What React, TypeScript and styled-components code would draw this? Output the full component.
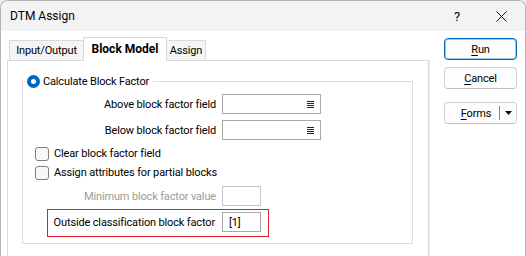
import React from "react";
import styled, { createGlobalStyle, css } from "styled-components";

const Global = createGlobalStyle`
  html, body { margin: 0; padding: 0; background: #ececec; }
  body {
    font-family: Roboto, "Liberation Sans", sans-serif;
    font-size: 11px;
    letter-spacing: -0.15px;
    color: #000;
  }
  * { box-sizing: border-box; }
`;

const Window = styled.div`
  width: 526px;
  height: 256px;
  display: flex;
  flex-direction: column;
  background: #fff;
  border: 1px solid #b4b4b4;
  border-bottom: none;
  border-radius: 8px 8px 0 0;
  overflow: hidden;
`;

const TitleBar = styled.div`
  height: 30px;
  flex: none;
  display: flex;
  align-items: center;
  background: #f3f3f3;
  padding-left: 9px;
  padding-right: 2px;
`;

const Title = styled.div`
  flex: 1;
  font-size: 12px;
  letter-spacing: 0;
`;

const CaptionButton = styled.div`
  width: 44px;
  height: 30px;
  display: flex;
  align-items: center;
  justify-content: center;
  font-size: 13px;
`;

const Body = styled.div`
  flex: 1;
  display: flex;
  min-height: 0;
`;

const TabArea = styled.div`
  width: 422px;
  margin-left: 6px;
  display: flex;
  flex-direction: column;
`;

const TabStrip = styled.div`
  display: flex;
  align-items: flex-end;
  margin-top: 6px;
  padding-left: 2px;
  position: relative;
  z-index: 1;
`;

const Tab = styled.div<{ $active?: boolean; $w: number }>`
  width: ${(p) => p.$w}px;
  display: flex;
  align-items: center;
  justify-content: center;
  border: 1px solid #d9d9d9;
  border-bottom: none;
  ${(p) =>
    p.$active
      ? css`
          height: 24px;
          margin-bottom: -1px;
          background: #fff;
          font-weight: 700;
          font-size: 12px;
          letter-spacing: 0;
          padding-bottom: 2px;
        `
      : css`
          height: 20px;
          background: #f5f5f5;
        `}
  & + & {
    margin-left: -1px;
  }
`;

const Panel = styled.div`
  flex: 1;
  border: 1px solid #d9d9d9;
  border-bottom: none;
  box-shadow: 1px 0 0 #ececec;
  background: #fff;
  padding: 20px 15px 0 14px;
`;

const Group = styled.div`
  position: relative;
  height: 163px;
  border: 1px solid #dcdcdc;
  display: flex;
  flex-direction: column;
`;

const Legend = styled.div`
  position: absolute;
  left: 3px;
  top: -9px;
  height: 16px;
  display: flex;
  align-items: center;
  gap: 3px;
  padding: 0 4px 0 1px;
  background: #fff;
`;

const Radio = styled.span`
  width: 13px;
  height: 13px;
  border-radius: 50%;
  border: 4px solid #0067c0;
  background: #fff;
`;

const FieldRow = styled.div<{ $mt: number }>`
  display: flex;
  align-items: center;
  height: 20px;
  margin-top: ${(p) => p.$mt}px;
`;

const Label = styled.span<{ $disabled?: boolean }>`
  width: 193px;
  margin-right: 6px;
  text-align: right;
  white-space: nowrap;
  color: ${(p) => (p.$disabled ? "#9b9b9b" : "#000")};
`;

const Input = styled.div<{ $w: number; $light?: boolean }>`
  width: ${(p) => p.$w}px;
  height: 20px;
  border: 1px solid ${(p) => (p.$light ? "#c6c6c6" : "#a8a8a8")};
  background: #fff;
  display: flex;
  align-items: center;
  padding: 0 6px;
`;

const MenuIcon = styled.svg`
  margin-left: auto;
`;

const CheckRow = styled.label<{ $mt: number }>`
  display: flex;
  align-items: center;
  height: 19px;
  margin-top: ${(p) => p.$mt}px;
  padding-left: 12px;
  gap: 5px;
`;

const CheckBox = styled.span`
  width: 14px;
  height: 14px;
  border: 1px solid #7f7f7f;
  border-radius: 3px;
  background: #f8f8f8;
`;

const Highlight = styled.div`
  display: flex;
  align-items: flex-start;
  margin: 3px 0 0 24px;
  width: 222px;
  height: 28px;
  border: 1px solid #e0202a;
  padding: 2px 7px 0 0;
`;

const HighlightLabel = styled.span`
  width: 167px;
  margin-right: 7px;
  height: 20px;
  display: flex;
  align-items: center;
  justify-content: flex-end;
  white-space: nowrap;
`;

const ButtonColumn = styled.div`
  display: flex;
  flex-direction: column;
  margin-left: 15px;
  padding-top: 7px;
`;

const Button = styled.div<{ $primary?: boolean; $mt?: number }>`
  width: 73px;
  height: 22px;
  margin-top: ${(p) => p.$mt ?? 0}px;
  border: 1px solid #d1d1d1;
  border-bottom-color: #c2c2c2;
  border-radius: 4px;
  background: #fdfdfd;
  display: flex;
  align-items: center;
  justify-content: center;
  ${(p) =>
    p.$primary &&
    css`
      border-color: #0067c0;
      box-shadow: inset 0 0 0 1px rgba(0, 103, 192, 0.35);
    `}
  u {
    text-underline-offset: 2px;
  }
`;

const SplitMain = styled.span`
  flex: 1;
  display: flex;
  justify-content: center;
  padding-left: 8px;
`;

const SplitDivider = styled.span`
  width: 1px;
  height: 14px;
  background: #8a8a8a;
`;

const SplitArrow = styled.span`
  width: 16px;
  display: flex;
  justify-content: center;
`;

const Lines = () => (
  <MenuIcon width="7" height="7" viewBox="0 0 7 7">
    {[0, 2, 4, 6].map((y) => (
      <rect key={y} x="0" y={y} width="7" height="1" fill="#222" />
    ))}
  </MenuIcon>
);

export default function App() {
  return (
    <>
      <Global />
      <Window>
        <TitleBar>
          <Title>DTM Assign</Title>
          <CaptionButton>?</CaptionButton>
          <CaptionButton>
            <svg width="11" height="11" viewBox="0 0 11 11">
              <path d="M0.5 0.5 L10.5 10.5 M10.5 0.5 L0.5 10.5" stroke="#111" strokeWidth="1" />
            </svg>
          </CaptionButton>
        </TitleBar>
        <Body>
          <TabArea>
            <TabStrip>
              <Tab $w={75}>Input/Output</Tab>
              <Tab $w={84} $active>
                Block Model
              </Tab>
              <Tab $w={40}>Assign</Tab>
            </TabStrip>
            <Panel>
              <Group>
                <Legend>
                  <Radio />
                  <span>Calculate Block Factor</span>
                </Legend>
                <FieldRow $mt={12}>
                  <Label>Above block factor field</Label>
                  <Input $w={99}>
                    <Lines />
                  </Input>
                </FieldRow>
                <FieldRow $mt={6}>
                  <Label>Below block factor field</Label>
                  <Input $w={99}>
                    <Lines />
                  </Input>
                </FieldRow>
                <CheckRow $mt={4}>
                  <CheckBox />
                  <span>Clear block factor field</span>
                </CheckRow>
                <CheckRow $mt={0}>
                  <CheckBox />
                  <span>Assign attributes for partial blocks</span>
                </CheckRow>
                <FieldRow $mt={4}>
                  <Label $disabled>Minimum block factor value</Label>
                  <Input $w={39} $light />
                </FieldRow>
                <Highlight>
                  <HighlightLabel>Outside classification block factor</HighlightLabel>
                  <Input $w={39}>[1]</Input>
                </Highlight>
              </Group>
            </Panel>
          </TabArea>
          <ButtonColumn>
            <Button $primary>
              <span>
                <u>R</u>un
              </span>
            </Button>
            <Button $mt={7}>
              <span>
                <u>C</u>ancel
              </span>
            </Button>
            <Button $mt={13}>
              <SplitMain>
                <span>
                  <u>F</u>orms
                </span>
              </SplitMain>
              <SplitDivider />
              <SplitArrow>
                <svg width="7" height="4" viewBox="0 0 7 4">
                  <path d="M0 0 H7 L3.5 4 Z" fill="#111" />
                </svg>
              </SplitArrow>
            </Button>
          </ButtonColumn>
        </Body>
      </Window>
    </>
  );
}
